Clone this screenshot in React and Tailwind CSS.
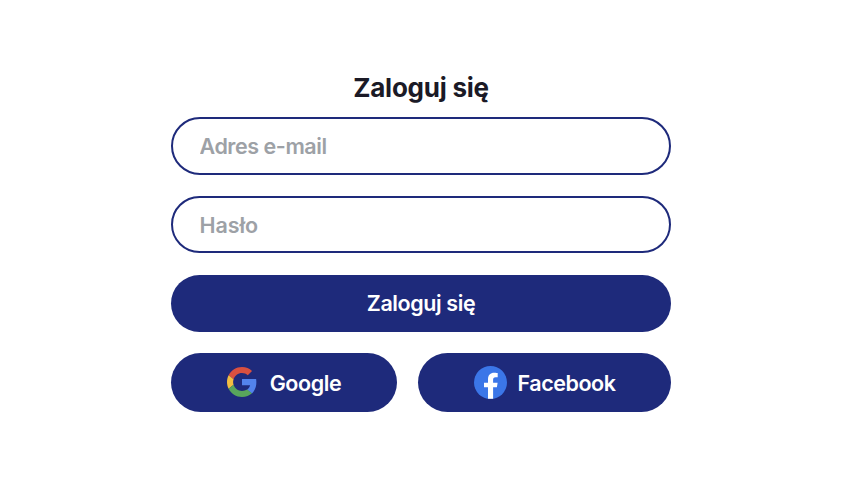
const field =
  "block w-[500px] rounded-full border-2 border-[#1e2a7b] bg-white px-[26.5px] text-[21.5px] font-[620] text-[#1b1a2e] outline-none placeholder:text-[#9da1a6]";

const button =
  "rounded-full bg-[#1e2a7b] text-[21.5px] font-[630] tracking-[-0.4px] text-white";

function GoogleLogo() {
  return (
    <svg viewBox="0 0 48 48" className="mb-px h-[30px] w-[30px]">
      <path fill="#d95040" d="M24 9.5c3.54 0 6.71 1.22 9.21 3.6l6.85-6.85C35.9 2.38 30.47 0 24 0 14.62 0 6.51 5.38 2.56 13.22l7.98 6.19C12.43 13.72 17.74 9.5 24 9.5z" />
      <path fill="#5383ec" d="M46.98 24.55c0-1.57-.15-3.8-.38-5.25H24v9.72h12.94c-.58 2.96-2.26 5.48-4.78 7.18l7.73 6c4.51-4.18 7.09-10.36 7.09-17.65z" />
      <path fill="#f2be42" d="M10.53 28.59c-.48-1.45-.76-2.99-.76-4.59s.27-3.14.76-4.59l-7.98-6.19C.92 16.46 0 20.12 0 24c0 3.88.92 7.54 2.56 10.78l7.97-6.19z" />
      <path fill="#58a55c" d="M24 48c6.48 0 11.93-2.13 15.89-5.81l-7.73-6c-2.15 1.45-4.92 2.3-8.16 2.3-6.26 0-11.57-4.22-13.47-9.91l-7.98 6.19C6.51 42.62 14.62 48 24 48z" />
    </svg>
  );
}

function FacebookLogo() {
  return (
    <svg viewBox="0 0 33 33" className="h-[33px] w-[33px]">
      <circle cx="16.5" cy="16.5" r="16.5" fill="#3b76e8" />
      <path fill="#fff" d="M14 32.8V21.2h-4v-4.4h4v-3.5c0-4.2 2.4-6.5 6.2-6.5 1.8 0 3.5.3 3.5.3v4.1h-2.1c-2 0-2.5 1.2-2.5 2.5v3.1h4.5l-.7 4.4h-3.8v11.6z" />
    </svg>
  );
}

export default function App() {
  return (
    <main className="flex h-[482px] w-[856px] justify-center bg-white pr-[14px] pt-[72px] font-[Inter,sans-serif]">
      <form className="flex w-[500px] flex-col">
        <h1 className="mb-[13px] h-8 text-center text-[26px] font-bold leading-8 tracking-[-0.25px] text-[#1b1a26]">Zaloguj się</h1>
        <input className={field + " h-[58px] tracking-[-0.44px]"} type="email" placeholder="Adres e-mail" />
        <input className={field + " mt-[21px] h-[57px] tracking-[-0.1px]"} type="password" placeholder="Hasło" />
        <button type="button" className={button + " mt-[22px] h-[57px]"}>Zaloguj się</button>
        <div className="mt-[21px] flex gap-[21px]">
          <button type="button" className={button + " flex h-[59px] w-[226px] items-center justify-center gap-[13px]"}>
            <GoogleLogo />
            <span className="pt-0.5">Google</span>
          </button>
          <button type="button" className={button + " flex h-[59px] w-[253px] items-center justify-center gap-[10px] pl-px tracking-[-0.45px]"}>
            <FacebookLogo />
            <span className="pt-0.5">Facebook</span>
          </button>
        </div>
      </form>
    </main>
  );
}
